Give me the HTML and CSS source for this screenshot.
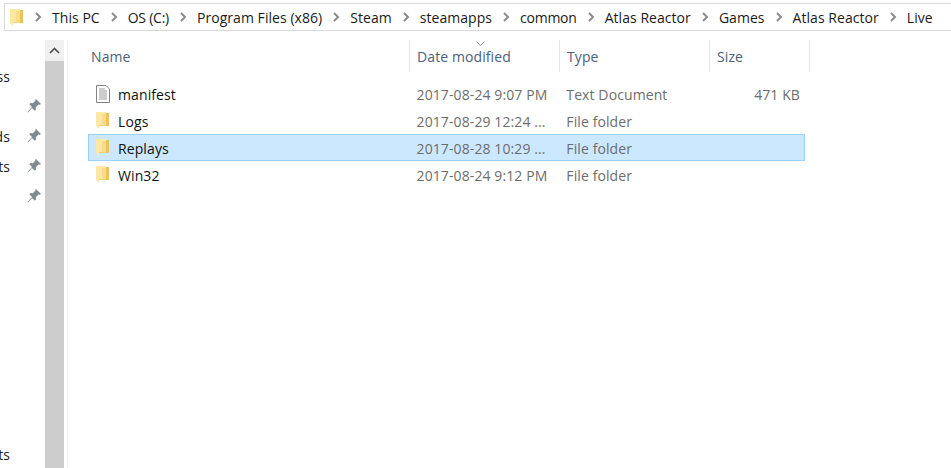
FILE: index.html
```html
<!DOCTYPE html>
<html lang="en">
<head>
  <meta charset="UTF-8">
  <title>Live</title>
  <link rel="stylesheet" href="styles.css">
</head>
<body>
  <svg width="0" height="0" class="defs">
    <symbol id="folder" viewBox="0 0 13 18">
      <path d="M0 0h9l1 1h3v13H2z" fill="#e8bd55"/>
      <path d="M0 0h10v13.500H3L3 17l-3-3z" fill="#fde7a4"/>
      <path d="M6 2h4v11.500H6z" fill="#f9dc85"/>
      <path d="M10 1.500h3V14h-3z" fill="#ecc25c"/>
    </symbol>
    <symbol id="pin" viewBox="0 0 14 14">
      <path d="M9 0l5 5-1.300.8-1.200-.3-2.700 2.700.2 2.300-1.200 1.200-2.800-2.800L1 13.500l-.5-.5 4.500-5L2.300 5.300 3.500 4.100l2.300.2L8.500 1.600 8.200.8z" fill="#7f8a94"/>
    </symbol>
    <symbol id="sep" viewBox="0 0 8 10">
      <path d="M2 1l4 4-4 4" fill="none" stroke="#8c8c8c" stroke-width="2"/>
    </symbol>
  </svg>

  <nav class="address">
    <svg class="address-icon"><use href="#folder"/></svg>
    <svg class="sep"><use href="#sep"/></svg><span>This PC</span>
    <svg class="sep"><use href="#sep"/></svg><span class="narrow">OS (C:)</span>
    <svg class="sep"><use href="#sep"/></svg><span>Program Files (x86)</span>
    <svg class="sep"><use href="#sep"/></svg><span>Steam</span>
    <svg class="sep"><use href="#sep"/></svg><span>steamapps</span>
    <svg class="sep"><use href="#sep"/></svg><span class="narrow">common</span>
    <svg class="sep"><use href="#sep"/></svg><span>Atlas Reactor</span>
    <svg class="sep"><use href="#sep"/></svg><span>Games</span>
    <svg class="sep"><use href="#sep"/></svg><span>Atlas Reactor</span>
    <svg class="sep"><use href="#sep"/></svg><span>Live</span>
  </nav>

  <main class="explorer">
    <aside class="sidebar">
      <div class="side-item"><span class="side-label">Quick access</span><span class="pin-slot"></span></div>
      <div class="side-item"><span class="side-label"></span><svg class="pin"><use href="#pin"/></svg></div>
      <div class="side-item"><span class="side-label">Downloads</span><svg class="pin"><use href="#pin"/></svg></div>
      <div class="side-item"><span class="side-label">Documents</span><svg class="pin"><use href="#pin"/></svg></div>
      <div class="side-item"><span class="side-label"></span><svg class="pin"><use href="#pin"/></svg></div>
      <div class="side-item side-last"><span class="side-label">Screenshots</span><span class="pin-slot"></span></div>
    </aside>

    <div class="scrollbar">
      <div class="scroll-up">
        <svg width="11" height="7" viewBox="0 0 11 7"><path d="M1 6l4.500-4.500L10 6" fill="none" stroke="#505050" stroke-width="1.600"/></svg>
      </div>
      <div class="scroll-thumb"></div>
    </div>

    <section class="files">
      <div class="file-head">
        <div class="col-head col-name">Name</div>
        <div class="col-head">
          <svg class="sort" width="9" height="5" viewBox="0 0 9 5"><path d="M.5.5l4 4 4-4" fill="none" stroke="#8d8d8d"/></svg>
          Date modified
        </div>
        <div class="col-head">Type</div>
        <div class="col-head">Size</div>
      </div>

      <div class="file-row">
        <div class="cell-name">
          <svg class="file-icon" width="14" height="18" viewBox="0 0 14 18">
            <path d="M.5.500h9.500l3.500 3.500v13.500H.500z" fill="#fff" stroke="#858585"/>
            <path d="M3 4h6M3 6h8M3 8h8M3 10h8M3 12h8M3 14h8" stroke="#9a9a9a"/>
          </svg>
          manifest
        </div>
        <div class="cell">2017-08-24 9:07 PM</div>
        <div class="cell">Text Document</div>
        <div class="cell cell-size">471 KB</div>
      </div>
      <div class="file-row">
        <div class="cell-name"><svg class="folder-icon"><use href="#folder"/></svg>Logs</div>
        <div class="cell">2017-08-29 12:24 ...</div>
        <div class="cell">File folder</div>
        <div class="cell cell-size"></div>
      </div>
      <div class="file-row selected">
        <div class="cell-name"><svg class="folder-icon"><use href="#folder"/></svg>Replays</div>
        <div class="cell">2017-08-28 10:29 ...</div>
        <div class="cell">File folder</div>
        <div class="cell cell-size"></div>
      </div>
      <div class="file-row">
        <div class="cell-name"><svg class="folder-icon"><use href="#folder"/></svg>Win32</div>
        <div class="cell">2017-08-24 9:12 PM</div>
        <div class="cell">File folder</div>
        <div class="cell cell-size"></div>
      </div>
    </section>
  </main>
</body>
</html>
```

FILE: styles.css
```css
/* Global */
*, *::before, *::after { box-sizing: border-box; }
html, body { height: 100%; }
body {
  margin: 0;
  display: flex;
  flex-direction: column;
  overflow: hidden;
  background: #fff;
  font-family: "Open Sans", "Noto Sans", sans-serif;
  font-size: 14px;
  letter-spacing: 0.1px;
  color: #1a1a1a;
}
.defs { position: absolute; }

/* Address bar */
.address {
  display: flex;
  align-items: center;
  height: 28px;
  margin: 3px 0 0 4px;
  border: 1px solid #d9d9d9;
  border-right: none;
  white-space: nowrap;
  letter-spacing: 0.05px;
}
.address-icon { width: 13px; height: 18px; margin: 1px 1px 0 5px; }
.sep { width: 8px; height: 10px; margin: 0 10px; }
.narrow { letter-spacing: -0.25px; }

/* Main area */
.explorer { display: flex; flex: 1; min-height: 0; margin-top: 9px; }

/* Sidebar, mostly scrolled out of view */
.sidebar {
  display: flex;
  flex-direction: column;
  width: 45px;
  padding-top: 21px;
  overflow: hidden;
}
.side-item { display: flex; align-items: center; justify-content: flex-end; height: 30px; flex: none; }
.side-label { white-space: nowrap; }
.pin, .pin-slot { flex: none; width: 14px; height: 14px; margin: 0 4px 0 17px; }
.side-last { margin-top: auto; margin-bottom: -1px; }

.scrollbar { display: flex; flex-direction: column; width: 19px; }
.scroll-up { display: flex; align-items: center; justify-content: center; height: 21px; background: #f0f0f0; }
.scroll-thumb { flex: 1; background: #cdcdcd; }

/* File list */
.files { flex: 1; margin-left: 3px; padding-left: 20px; border-left: 1px solid #f2f2f2; }
.file-head { display: flex; height: 32px; margin-bottom: 8px; }
.col-head {
  position: relative;
  display: flex;
  align-items: center;
  width: 150px;
  padding-left: 7px;
  border-right: 1px solid #e5e5e5;
  color: #4c607a;
}
.col-name { width: 322px; padding-left: 3px; }
.col-head:last-child { width: 100px; }
.sort { position: absolute; left: 66px; top: 1px; }

.file-row { display: flex; align-items: center; height: 27px; width: 717px; padding-top: 2px; border: 1px solid transparent; }
.file-row.selected { background: #cce8ff; border-color: #99d1ff; }
.cell-name { display: flex; align-items: center; width: 321px; padding-left: 7px; color: #111; }
.file-icon { margin: -2px 8px 0 0; }
.folder-icon { width: 13px; height: 18px; margin: -1px 9px 0 0; }
.cell { width: 150px; padding-left: 7px; color: #6d6d6d; white-space: nowrap; }
.cell-size { width: 95px; padding: 0 4px 0 0; text-align: right; }
```
